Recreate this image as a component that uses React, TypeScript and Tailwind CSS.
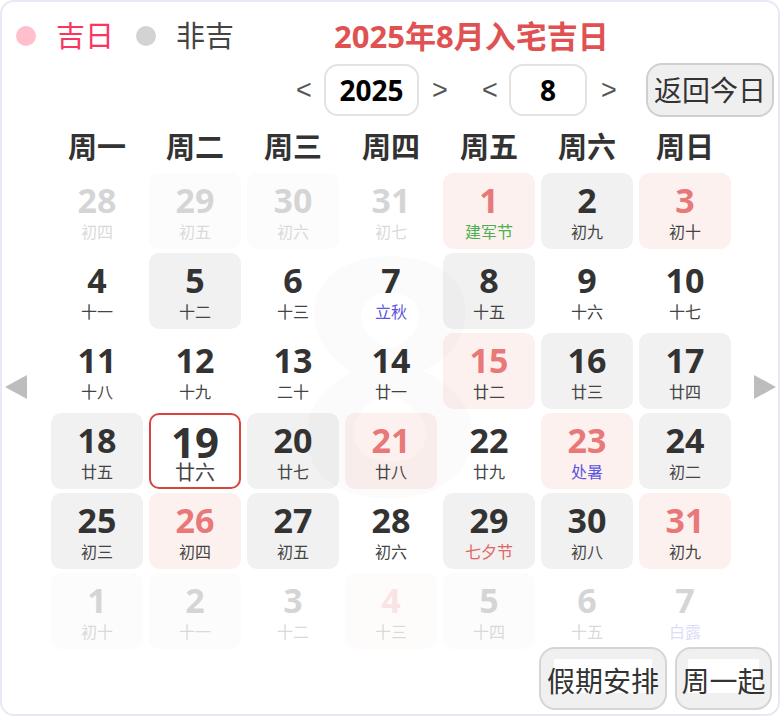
import React from "react";

type Kind = "none" | "grey" | "pink";
interface Day {
  d: number;
  l: string;
  k: Kind;
  red?: boolean;
  lc?: string;
  faded?: boolean;
  today?: boolean;
}

const G = "grey" as Kind;
const P = "pink" as Kind;
const N = "none" as Kind;
const GREEN = "text-[#4cb050]";
const BLUE = "text-[#5a55e0]";
const RED = "text-[#e36464]";

const days: Day[] = [
  { d: 28, l: "初四", k: N, faded: true },
  { d: 29, l: "初五", k: G, faded: true },
  { d: 30, l: "初六", k: G, faded: true },
  { d: 31, l: "初七", k: N, faded: true },
  { d: 1, l: "建军节", k: P, red: true, lc: GREEN },
  { d: 2, l: "初九", k: G },
  { d: 3, l: "初十", k: P, red: true },
  { d: 4, l: "十一", k: N },
  { d: 5, l: "十二", k: G },
  { d: 6, l: "十三", k: N },
  { d: 7, l: "立秋", k: N, lc: BLUE },
  { d: 8, l: "十五", k: G },
  { d: 9, l: "十六", k: N },
  { d: 10, l: "十七", k: N },
  { d: 11, l: "十八", k: N },
  { d: 12, l: "十九", k: N },
  { d: 13, l: "二十", k: N },
  { d: 14, l: "廿一", k: N },
  { d: 15, l: "廿二", k: P, red: true },
  { d: 16, l: "廿三", k: G },
  { d: 17, l: "廿四", k: G },
  { d: 18, l: "廿五", k: G },
  { d: 19, l: "廿六", k: N, today: true },
  { d: 20, l: "廿七", k: G },
  { d: 21, l: "廿八", k: P, red: true },
  { d: 22, l: "廿九", k: N },
  { d: 23, l: "处暑", k: P, red: true, lc: BLUE },
  { d: 24, l: "初二", k: G },
  { d: 25, l: "初三", k: G },
  { d: 26, l: "初四", k: P, red: true },
  { d: 27, l: "初五", k: G },
  { d: 28, l: "初六", k: N },
  { d: 29, l: "七夕节", k: G, lc: RED },
  { d: 30, l: "初八", k: G },
  { d: 31, l: "初九", k: P, red: true },
  { d: 1, l: "初十", k: G, faded: true },
  { d: 2, l: "十一", k: G, faded: true },
  { d: 3, l: "十二", k: N, faded: true },
  { d: 4, l: "十三", k: P, red: true, faded: true },
  { d: 5, l: "十四", k: G, faded: true },
  { d: 6, l: "十五", k: N, faded: true },
  { d: 7, l: "白露", k: N, lc: BLUE, faded: true },
];

const weeks = ["周一", "周二", "周三", "周四", "周五", "周六", "周日"];

const ARROW = { fontFamily: '"Liberation Sans", sans-serif' };

function Cell({ day }: { day: Day }) {
  const bg =
    day.k === "grey" ? "bg-[#f1f1f1]" : day.k === "pink" ? "bg-[#fdf1f0]" : "";
  if (day.today) {
    return (
      <div className="h-[76px] rounded-[10px] border-2 border-[#d8453f] bg-white flex flex-col items-center">
        <div className="mt-[5px] leading-[44px] text-[42px] font-bold text-[#333]">
          {day.d}
        </div>
        <div className="mt-[-2px] leading-[22px] text-[20px] text-[#444]">
          {day.l}
        </div>
      </div>
    );
  }
  return (
    <div
      className={`h-[76px] rounded-[10px] flex flex-col items-center ${bg} ${
        day.faded ? "opacity-20" : ""
      }`}
    >
      <div
        className={`mt-[10px] leading-[34px] text-[34px] font-bold ${
          day.red ? "text-[#e97878]" : "text-[#333]"
        }`}
      >
        {day.d}
      </div>
      <div className={`mt-[5px] leading-[20px] text-[16px] ${day.lc ?? "text-[#444]"}`}>
        {day.l}
      </div>
    </div>
  );
}

function BottomButton({ text, w }: { text: string; w: string }) {
  return (
    <button
      className={`${w} h-[63px] rounded-[16px] border-2 border-[#d5d5d5] bg-[#f0f0f0] text-[28px] text-[#333] flex items-center justify-center`}
    >
      <span className="relative inline-block leading-[32px] mt-[4px]">
        <span className="absolute left-[7px] right-[7px] top-[-6px] bottom-[4px] bg-white" />
        <span className="relative">{text}</span>
      </span>
    </button>
  );
}

export default function App() {
  return (
    <div
      className="relative w-[780px] h-[716px] bg-white border-2 border-[#e7eaf5] rounded-[14px] overflow-hidden flex flex-col"
      style={{ fontFamily: '"Open Sans", "Noto Sans CJK SC", sans-serif' }}
    >
      {/* watermark */}
      <div className="pointer-events-none absolute left-0 right-0 top-[200px] text-center text-[330px] font-bold leading-none text-black opacity-[0.012]">
        8
      </div>

      {/* header row */}
      <div className="mt-[10px] h-[48px] flex items-center pl-[14px]">
        <span className="w-[20px] h-[20px] rounded-full bg-[#ffc0cb]" />
        <span className="ml-[20px] text-[29px] text-[#fb3560] leading-[40px]">吉日</span>
        <span className="ml-[22px] w-[20px] h-[20px] rounded-full bg-[#d3d3d3]" />
        <span className="ml-[20px] text-[29px] text-[#444] leading-[40px]">非吉</span>
        <span className="ml-[100px] text-[31px] font-bold text-[#e05252] leading-[40px]">
          2025年8月入宅吉日
        </span>
      </div>

      {/* controls */}
      <div className="mt-[3px] h-[54px] flex items-center justify-end pr-[4px]">
        <span className="w-[14px] text-center text-[27px] text-[#555]" style={ARROW}>&lt;</span>
        <div className="ml-[14px] w-[95px] h-[52px] rounded-[14px] border-2 border-[#e3e3e3] flex items-center justify-center text-[28px] font-bold text-black">
          2025
        </div>
        <span className="ml-[13px] w-[14px] text-center text-[27px] text-[#555]" style={ARROW}>&gt;</span>
        <span className="ml-[36px] w-[14px] text-center text-[27px] text-[#555]" style={ARROW}>&lt;</span>
        <div className="ml-[13px] w-[78px] h-[52px] rounded-[14px] border-2 border-[#e3e3e3] flex items-center justify-center text-[28px] font-bold text-black">
          8
        </div>
        <span className="ml-[14px] w-[14px] text-center text-[27px] text-[#555]" style={ARROW}>&gt;</span>
        <button className="ml-[31px] w-[128px] h-[54px] rounded-[16px] border-2 border-[#cfcfcf] bg-[#efefef] text-[28px] text-[#333] flex items-center justify-center">
          返回今日
        </button>
      </div>

      {/* weekdays */}
      <div className="mt-[12px] ml-[49px] h-[36px] grid grid-cols-[repeat(7,92px)] gap-x-[6px]">
        {weeks.map((w) => (
          <div key={w} className="text-center text-[29px] font-bold text-[#333] leading-[36px]">
            {w}
          </div>
        ))}
      </div>

      {/* grid */}
      <div className="mt-[8px] ml-[49px] grid grid-cols-[repeat(7,92px)] gap-x-[6px] gap-y-[4px]">
        {days.map((d, i) => (
          <Cell key={i} day={d} />
        ))}
      </div>

      {/* bottom buttons */}
      <div className="mt-[-2px] flex justify-end pr-[6px] gap-[8px]">
        <BottomButton text="假期安排" w="w-[128px]" />
        <BottomButton text="周一起" w="w-[97px]" />
      </div>

      {/* side arrows */}
      <div className="absolute left-[3px] top-[373px] w-0 h-0 border-y-[12px] border-y-transparent border-r-[22px] border-r-[#bdbdbd]" />
      <div className="absolute right-[2px] top-[373px] w-0 h-0 border-y-[12px] border-y-transparent border-l-[22px] border-l-[#bdbdbd]" />
    </div>
  );
}
